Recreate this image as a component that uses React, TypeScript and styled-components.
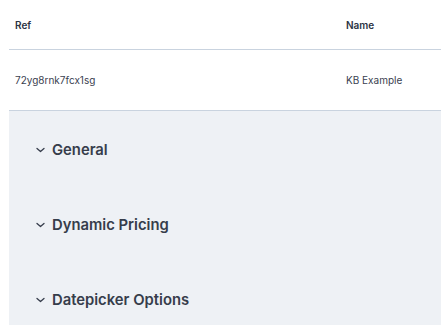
import styled, { createGlobalStyle } from "styled-components";

const GlobalStyle = createGlobalStyle`
  html, body {
    margin: 0;
    padding: 0;
    background: #ffffff;
    font-family: Inter, "Noto Sans", sans-serif;
  }
`;

const StyledPage = styled.div`
  width: 441px;
  height: 325px;
  overflow: hidden;
  padding-left: 9px;
  box-sizing: border-box;
`;

const StyledTable = styled.div`
  display: flex;
  flex-direction: column;
  width: 100%;
`;

const StyledRow = styled.div<{ $height: number }>`
  display: grid;
  grid-template-columns: 331px 1fr;
  align-items: center;
  height: ${(props) => props.$height}px;
  border-bottom: 1px solid #c9d3df;
`;

const StyledCell = styled.div<{ $header?: boolean }>`
  padding-left: 6px;
  font-size: 10px;
  font-weight: ${(props) => (props.$header ? 600 : 400)};
  color: ${(props) => (props.$header ? "#2c3444" : "#3a4150")};
  white-space: nowrap;
`;

const StyledPanel = styled.div`
  display: flex;
  flex-direction: column;
  background-color: #eef1f5;
  height: 216px;
`;

const StyledSection = styled.div`
  display: flex;
  align-items: center;
  flex-shrink: 0;
  gap: 7px;
  height: 75px;
  padding-left: 27px;
  padding-top: 2px;
  box-sizing: border-box;
  font-size: 14.8px;
  font-weight: 600;
  color: #363d4b;
  user-select: none;

  &:hover {
    cursor: pointer;
  }
`;

const Chevron = () => (
  <svg width="9" height="6" viewBox="0 0 9 6" fill="none">
    <path
      d="M1 1.5 L4.5 4.5 L8 1.5"
      stroke="#363d4b"
      strokeWidth="1.3"
      strokeLinecap="round"
      strokeLinejoin="round"
    />
  </svg>
);

const sections = ["General", "Dynamic Pricing", "Datepicker Options"];

const App = () => {
  return (
    <StyledPage>
      <GlobalStyle />
      <StyledTable>
        <StyledRow $height={49}>
          <StyledCell $header>Ref</StyledCell>
          <StyledCell $header>Name</StyledCell>
        </StyledRow>
        <StyledRow $height={60}>
          <StyledCell>72yg8rnk7fcx1sg</StyledCell>
          <StyledCell>KB Example</StyledCell>
        </StyledRow>
      </StyledTable>
      <StyledPanel>
        {sections.map((title) => (
          <StyledSection key={title}>
            <Chevron />
            {title}
          </StyledSection>
        ))}
      </StyledPanel>
    </StyledPage>
  );
};

export default App;
